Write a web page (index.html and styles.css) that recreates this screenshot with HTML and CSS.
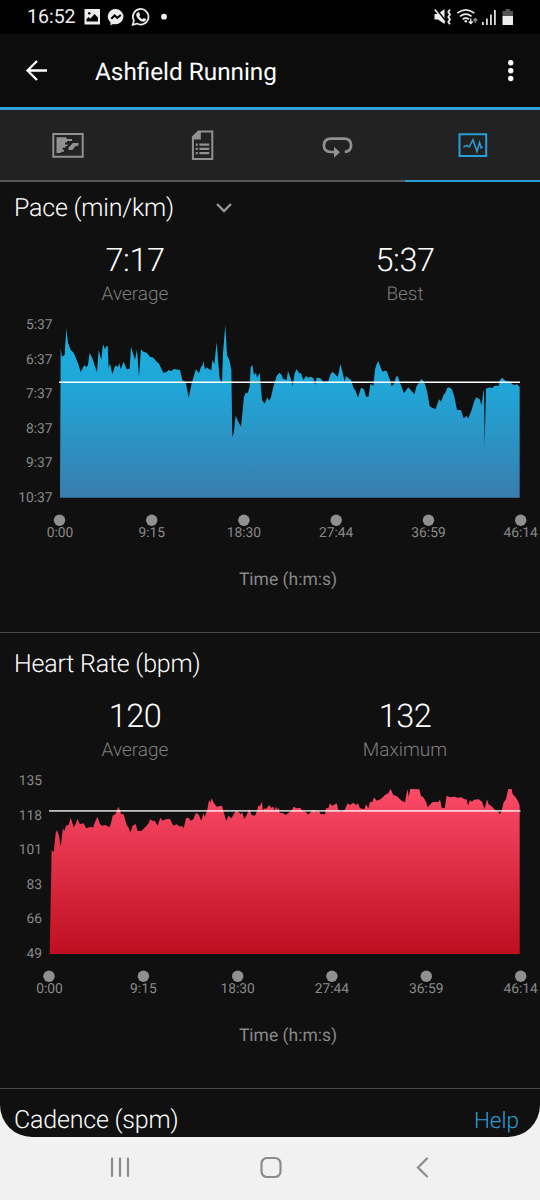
FILE: index.html
```html
<!DOCTYPE html>
<html lang="en">
<head>
<meta charset="utf-8">
<title>Ashfield Running</title>
<link rel="stylesheet" href="styles.css">
</head>
<body>
<div class="screen">
  <header class="status">
    <span class="clock">16:52</span>
    <svg class="status-left" width="90" height="34" viewBox="80 0 90 34">
      <path fill="#eee" fill-rule="evenodd" d="M85 9h14.500q.5 0 .5.5V24q0 .5-.5.5H85q-.5 0-.5-.5V9.500q0-.5.5-.5zM86.500 21.500H98V17.500L94.500 14l-4 4.500-2-1.500-2 2zM89.300 12a1.300 1.300 0 1 0 .01 0z"/>
      <path fill="#eee" d="M116 9a8 7.600 0 0 0-5.500 13.300v3l2.800-1.400A8 7.600 0 1 0 116 9z"/>
      <path fill="none" stroke="#000" stroke-width="2" d="m111.300 18.800 3.300-3.300 2.700 2.500 3.500-3"/>
      <path fill="none" stroke="#eee" stroke-width="1.700" d="M132.700 24.800l1.200-4.200a7.800 7.800 0 1 1 3 3z"/>
      <path fill="#eee" d="M137.500 12.500l1.500-.2 1.200 2.700-1 1.200q1.300 2.300 3.300 3l1.200-1.300 2.500 1.200q0 2.200-2.500 2.600c-4 0-8-5-7.400-7.200q.2-1.200 1.200-2z"/>
      <circle cx="164" cy="16.700" r="2.900" fill="#eee"/>
    </svg>
    <svg class="status-right" width="90" height="34" viewBox="430 0 90 34">
      <path fill="#eee" d="M434.500 14h3.500l6.500-5v15l-6.500-4.500h-3.500z"/>
      <path stroke="#000" stroke-width="2" d="m435.300 8.200 11 13.800"/>
      <path stroke="#eee" stroke-width="1.500" d="m434.800 9.500 10 12.500"/>
      <path fill="none" stroke="#eee" stroke-width="1.800" d="M450 9.500l-1.700 2.500 1.700 2.500-1.700 2.500 1.700 2.500-1.700 2.500 1.700 2.300"/>
      <path fill="none" stroke="#eee" stroke-width="1.700" d="M457.300 13.200q8.500-6.700 17 0M460 16.300q5.800-4.500 11.600 0M462.700 19.300q3-2.300 6.200 0"/>
      <circle cx="465.800" cy="21.300" r="1.300" fill="#eee"/>
      <path fill="none" stroke="#eee" stroke-width="1.300" d="M470.800 18.500v5m-2-2 2 2 2-2"/>
      <path fill="none" stroke="#888" stroke-width="1.300" d="M475.300 23v-4.500m-2 2 2-2 2 2"/>
      <path fill="#ddd" d="M482 22h1.800v3H482zM486 18.500h1.800V25H486zM490 14.500h1.800V25H490zM494 10h1.800v15H494z"/>
      <path fill="#555" d="M502.500 16v-5h3V9h4.500v2h3v5z"/>
      <path fill="#eee" d="M502.500 16H513v8.500q0 .5-.5.5H503q-.5 0-.5-.5z"/>
    </svg>
  </header>

  <div class="appbar">
    <svg class="back" width="24" height="24" viewBox="0 0 24 24"><path d="M23 11.500H4M13 2 3.500 11.500 13 21"/></svg>
    <h1 class="activity">Ashfield Running</h1>
    <svg class="more" width="8" height="24" viewBox="0 0 8 24"><circle cx="3.700" cy="3.700" r="2.700"/><circle cx="3.700" cy="11.700" r="2.700"/><circle cx="3.700" cy="19.500" r="2.700"/></svg>
  </div>

  <nav class="tabs">
    <a class="tab">
      <svg width="34" height="34" viewBox="0 0 34 34"><path class="line" d="M2.300 6h29.400v22.700H2.300z"/><path class="solid" d="M5.500 9.300h10v1.700h5.500v2h-5v1.500h-2v2h2.500v1.500h-2v1.700h-3v2h1.500v2h-3v1.300H5.500zM27.500 15.100v2.500l-3.500 1-2.500 3.500h-4v-2.500l2-2 2.500-2.500z"/></svg>
    </a>
    <a class="tab">
      <svg width="34" height="34" viewBox="0 0 34 34"><path class="line" d="M12.500 3.500h13.800v27.400H6.900V9z"/><path class="solid" d="M6.500 11.500V8.500l6-5.500h2.300v8.500zM9.800 15.500h2v2.200h-2zm3.600 0h9.800v2.200h-9.800zM9.800 19.800h2v2.200h-2zm3.600 0h9.800v2.200h-9.800zM9.800 24h2v2.200h-2zm3.600 0h9.800v2.200h-9.800z"/></svg>
    </a>
    <a class="tab">
      <svg width="34" height="34" viewBox="0 0 34 34"><path class="loop" d="M14 24H10q-7.100-.3-7.100-6.500 0-6.900 7.500-6.900H23q7.100 0 7.100 6.900 0 5.500-6.300 6.500"/><path class="solid" d="M13 18.700 19 24.200l-6 5.500z"/></svg>
    </a>
    <a class="tab active">
      <svg width="34" height="34" viewBox="0 0 34 34"><path class="line" d="M3.500 6.300h26.700v21.700H3.500z"/><path class="pulse" d="M7.500 19l3.200-1.700 2.500 1.700 3.800-7.300 4 11.800 2.500-9 1.700 5.500 1.300-1.500"/></svg>
    </a>
  </nav>

  <main>
    <section class="metric first">
      <h2 class="title">Pace (min/km)<svg class="chevron" width="18" height="14" viewBox="0 0 18 14"><path d="m2 2 7 7 7-7"/></svg></h2>
      <div class="stats">
        <div><div class="value">7:17</div><div class="caption">Average</div></div>
        <div><div class="value">5:37</div><div class="caption">Best</div></div>
      </div>
      <svg class="chart" width="540" height="240" viewBox="0 0 540 240">
        <defs><linearGradient id="pace" gradientUnits="userSpaceOnUse" x1="0" y1="45" x2="0" y2="563"><stop offset="0" stop-color="#1ab2e1"/><stop offset=".38" stop-color="#20a5d6"/><stop offset="1" stop-color="#3a7dae"/></linearGradient></defs>
        <g transform="scale(.33333)"><path fill="url(#pace)" d="M180 563L182 115 186 140 194 135 199 55 204 98 212 120 221 128 230 150 236 165 242 187 250 170 254 165 258 172 264 165 269 128 277 145 291 187 296 120 304 150 309 103 315 118 319 108 323 108 326 175 330 160 337 193 345 168 349 167 353 172 358 160 362 178 371 155 380 178 389 176 393 110 399 130 405 150 411 118 417 200 423 118 430 125 440 128 450 140 460 143 470 155 476 160 482 172 490 188 500 186 507 179 512 184 522 177 540 180 548 213 557 216 566 263 576 216 588 178 597 190 603 170 607 168 610 153 615 178 620 172 628 178 634 181 637 150 643 163 650 97 655 160 659 205 666 220 669 130 676 45 681 135 688 150 694 180 697 381 701 370 707 317 715 335 723 350 732 260 737 248 743 250 749 230 752 172 757 165 762 195 768 188 771 203 779 188 786 270 794 281 802 262 807 272 813 262 820 230 830 198 838 188 845 195 849 206 860 210 864 183 872 205 878 228 884 190 890 177 897 190 903 190 910 210 918 198 925 203 931 200 940 204 946 225 950 203 960 204 970 215 985 213 992 192 998 185 1005 193 1013 200 1017 185 1021 162 1028 188 1034 215 1038 198 1045 205 1053 210 1060 232 1068 245 1074 263 1083 233 1092 238 1098 260 1106 260 1111 222 1120 228 1125 180 1129 165 1135 153 1141 170 1147 185 1154 182 1160 183 1170 210 1175 228 1182 222 1188 200 1193 198 1200 218 1212 250 1225 232 1232 240 1243 253 1250 228 1257 218 1264 207 1273 216 1281 243 1289 288 1296 293 1307 297 1317 268 1323 275 1332 252 1336 250 1341 235 1346 232 1356 238 1363 260 1371 300 1383 300 1391 325 1399 318 1405 325 1415 300 1422 275 1429 262 1439 268 1445 285 1450 245 1452 240 1454 405 1458 235 1462 235 1470 232 1476 235 1483 228 1496 227 1500 210 1507 203 1513 210 1520 214 1530 214 1536 222 1545 226 1550 222 1559 230 1559 563z"/></g>
        <path stroke="#fff" stroke-width="1.400" d="M59 72.300h461"/>
        <g class="axis y"><text x="52.500" y="18.700">5:37</text><text x="52.500" y="53.700">6:37</text><text x="52.500" y="88">7:37</text><text x="52.500" y="122.700">8:37</text><text x="52.500" y="157.300">9:37</text><text x="52.500" y="191.700">10:37</text></g>
        <g class="dots"><circle cx="59.500" cy="210.300" r="5.700"/><circle cx="151.700" cy="210.300" r="5.700"/><circle cx="243.900" cy="210.300" r="5.700"/><circle cx="336.200" cy="210.300" r="5.700"/><circle cx="428.500" cy="210.300" r="5.700"/><circle cx="520.700" cy="210.300" r="5.700"/></g>
        <g class="axis x"><text x="60" y="227">0:00</text><text x="151.700" y="227">9:15</text><text x="243.900" y="227">18:30</text><text x="336.200" y="227">27:44</text><text x="428.500" y="227">36:59</text><text x="520.700" y="227">46:14</text></g>
      </svg>
      <div class="unit">Time (h:m:s)</div>
    </section>

    <section class="metric">
      <h2 class="title">Heart Rate (bpm)</h2>
      <div class="stats">
        <div><div class="value">120</div><div class="caption">Average</div></div>
        <div><div class="value">132</div><div class="caption">Maximum</div></div>
      </div>
      <svg class="chart" width="540" height="240" viewBox="0 0 540 240">
        <defs><linearGradient id="heart" gradientUnits="userSpaceOnUse" x1="0" y1="72" x2="0" y2="567"><stop offset="0" stop-color="#fc4b68"/><stop offset="1" stop-color="#be0e20"/></linearGradient></defs>
        <g transform="translate(0 -1) scale(.33333)"><path fill="url(#heart)" d="M149 567L155 255 161 262 167 205 171 195 177 212 182 245 189 190 193 198 198 182 206 180 212 158 221 187 227 178 232 162 240 178 251 175 258 190 267 187 275 185 279 188 285 172 292 155 300 178 308 182 316 180 328 187 333 175 338 152 346 148 356 125 363 147 371 148 380 180 386 188 391 203 398 182 407 177 413 198 424 198 437 185 446 175 450 163 458 168 464 167 473 182 481 158 488 167 497 163 510 162 520 182 530 178 540 185 545 182 551 190 558 160 566 158 572 167 580 163 588 143 597 150 604 168 610 145 614 155 622 135 627 105 631 113 635 100 640 112 650 125 666 122 672 145 679 168 685 152 694 160 700 150 707 137 715 140 722 148 727 143 733 162 740 150 748 133 755 150 765 152 772 135 775 122 780 122 786 110 789 145 791 130 798 132 808 120 813 128 820 125 823 137 828 125 832 135 835 127 839 143 850 145 857 150 866 143 874 138 881 125 890 130 900 128 908 137 916 140 925 149 935 138 942 135 950 140 956 137 962 147 975 148 978 130 985 130 990 115 996 123 1010 115 1015 135 1024 140 1034 135 1043 115 1050 120 1060 113 1068 120 1074 115 1080 130 1093 133 1098 118 1105 130 1110 110 1117 112 1122 97 1130 107 1143 102 1155 90 1165 85 1172 72 1180 90 1190 93 1205 107 1215 112 1222 73 1226 95 1231 72 1258 73 1263 93 1270 97 1278 110 1283 127 1297 112 1307 110 1315 112 1320 103 1325 128 1334 130 1340 92 1350 97 1362 95 1375 98 1385 97 1393 103 1400 103 1404 122 1410 105 1416 110 1422 104 1436 103 1446 110 1454 132 1461 103 1466 118 1477 125 1485 135 1495 140 1499 148 1505 138 1510 115 1518 102 1525 72 1535 72 1538 88 1547 97 1555 110 1559 122 1559 567z"/></g>
        <path stroke="#fff" stroke-opacity=".75" stroke-width="1.700" d="M49 44.900h471.500"/>
        <g class="axis y"><text x="42" y="18.700">135</text><text x="42" y="53.700">118</text><text x="42" y="88">101</text><text x="42" y="122.700">83</text><text x="42" y="157.300">66</text><text x="42" y="191.700">49</text></g>
        <g class="dots"><circle cx="49" cy="210.300" r="5.700"/><circle cx="143.400" cy="210.300" r="5.700"/><circle cx="237.700" cy="210.300" r="5.700"/><circle cx="331.900" cy="210.300" r="5.700"/><circle cx="426.300" cy="210.300" r="5.700"/><circle cx="520.700" cy="210.300" r="5.700"/></g>
        <g class="axis x"><text x="49.500" y="227">0:00</text><text x="143.400" y="227">9:15</text><text x="237.700" y="227">18:30</text><text x="331.900" y="227">27:44</text><text x="426.300" y="227">36:59</text><text x="520.700" y="227">46:14</text></g>
      </svg>
      <div class="unit">Time (h:m:s)</div>
    </section>

    <section class="peek">
      <h2 class="title">Cadence (spm)</h2>
      <a class="help">Help</a>
    </section>
  </main>
</div>
<footer class="softkeys">
  <svg width="540" height="63" viewBox="0 1137 540 63"><path d="M112 1158.500v17.500M120 1158.500v17.500M128 1158.500v17.500"/><rect x="261.500" y="1158" width="19" height="19" rx="5.500"/><path d="m427 1158.500-9 9 9 9"/></svg>
</footer>
</body>
</html>
```

FILE: styles.css
```css
* { box-sizing: border-box; }
body {
  margin: 0;
  width: 540px;
  height: 1200px;
  overflow: hidden;
  background: #f1f1f1;
  color: #fff;
  font-family: Roboto, sans-serif;
  text-rendering: geometricPrecision;
}
h1, h2 { margin: 0; }
svg { display: block; }
.screen {
  height: 1137px;
  overflow: hidden;
  background: #101010;
  border-radius: 0 0 32px 32px;
}
.status {
  display: flex;
  align-items: center;
  height: 34px;
  padding: 0 20px 0 27px;
  background: #000;
}
.clock { width: 53px; color: #eee; font-size: 19.500px; line-height: 34px; }
.status-right { margin-left: auto; }
.appbar {
  display: flex;
  align-items: center;
  height: 76px;
  padding: 0 25px 0 24px;
  background: #0c0c0c;
  border-bottom: 3px solid #2ea0d6;
}
.back { fill: none; stroke: #fff; stroke-width: 2.300; }
.activity { flex: 1; margin-left: 47px; padding-top: 2px; font-size: 24.300px; font-weight: 400; line-height: 30px; }
.more { fill: #fff; }
.tabs { display: grid; grid-template-columns: repeat(4, 1fr); height: 72px; background: #222; }
.tab { display: flex; justify-content: center; align-items: center; border-bottom: 2px solid #585858; color: #919191; }
.tab.active { color: #2a9fd6; border-color: #2a9fd6; }
.line { fill: none; stroke: currentColor; stroke-width: 2; }
.solid { fill: currentColor; }
.loop { fill: none; stroke: currentColor; stroke-width: 2.700; }
.pulse { fill: none; stroke: currentColor; stroke-width: 1.500; }
.metric { height: 456px; padding-top: 17px; border-bottom: 1px solid #4c4c4c; }
.metric.first { height: 451px; padding-top: 12px; }
.title {
  display: flex;
  align-items: center;
  height: 30px;
  padding-left: 14px;
  font-size: 25px;
  font-weight: 300;
  line-height: 30px;
  letter-spacing: -.2px;
}
.chevron { margin-left: 41px; fill: none; stroke: #999; stroke-width: 2.300; }
.stats { display: grid; grid-template-columns: 1fr 1fr; height: 86px; padding-top: 16px; text-align: center; }
.value { font-size: 32.500px; font-weight: 300; line-height: 40px; letter-spacing: -.5px; }
.caption { padding-top: 1px; color: #7e7e7e; font-size: 19px; font-weight: 300; line-height: 26px; }
.axis { fill: #898989; font-size: 13.800px; }
.axis.y { text-anchor: end; }
.axis.x { text-anchor: middle; }
.dots { fill: #909090; }
.unit { margin-top: 18px; padding-left: 36px; color: #898989; font-size: 17.500px; line-height: 24px; text-align: center; }
.peek { display: flex; justify-content: space-between; padding: 17px 21px 0 0; }
.help { color: #2a9fd6; font-size: 22.500px; font-weight: 300; line-height: 30px; }
.softkeys { height: 63px; fill: none; stroke: #8b8b8b; stroke-width: 2.200; stroke-linecap: round; }
```
